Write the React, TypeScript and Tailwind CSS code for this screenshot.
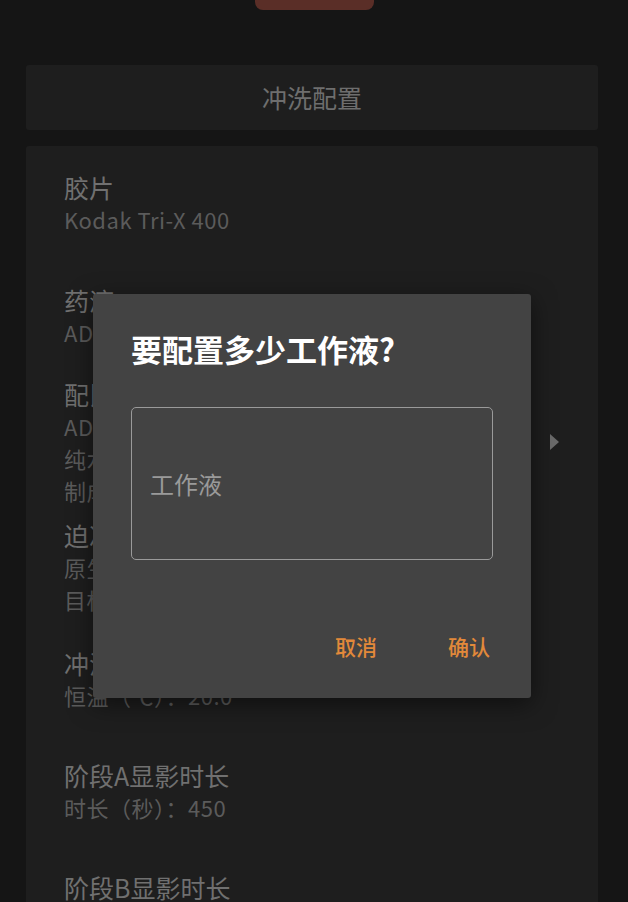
import React from 'react';

const font = { fontFamily: '"Noto Sans CJK SC", "Noto Sans", sans-serif' };

interface Item {
  title: string;
  lines: string[];
  gap: string;
  arrow?: boolean;
}

const items: Item[] = [
  { title: '胶片', lines: ['Kodak Tri-X 400'], gap: 'mb-[49px]' },
  { title: '药液', lines: ['ADOX ATOMAL 49'], gap: 'mb-[30px]' },
  {
    title: '配比',
    lines: ['ADOX ATOMAL 49：1', '纯水：0', '制成：1:0'],
    gap: 'mb-[13px]',
    arrow: true,
  },
  { title: '迫冲', lines: ['原生ISO：400', '目标ISO：400'], gap: 'mb-[32px]' },
  { title: '冲洗温度', lines: ['恒温（℃）：20.0'], gap: 'mb-[48px]' },
  { title: '阶段A显影时长', lines: ['时长（秒）：450'], gap: 'mb-[48px]' },
  { title: '阶段B显影时长', lines: ['时长（秒）：0'], gap: 'mb-[48px]' },
];

const Row = ({ item }: { item: Item }) => (
  <div className={`flex items-center ${item.gap}`}>
    <div className="flex-1 flex flex-col">
      <div className="text-[25px] leading-[32px] text-[#707070]">{item.title}</div>
      {item.lines.map((l) => (
        <div key={l} className="text-[22px] leading-[32px] tracking-[0.5px] text-[#5b5b5b] whitespace-nowrap">
          {l}
        </div>
      ))}
    </div>
    {item.arrow && (
      <svg width="9" height="16" viewBox="0 0 9 16" className="shrink-0">
        <path d="M0 0 L9 8 L0 16 Z" fill="#6a6a6a" />
      </svg>
    )}
  </div>
);

export default function App() {
  return (
    <div className="relative w-[628px] h-[902px] overflow-hidden bg-[#151515]" style={font}>
      {/* top button, scrolled mostly out of view */}
      <div className="flex justify-center">
        <div className="w-[119px] h-[10px] rounded-b-[8px] bg-[#5a2e27]" />
      </div>

      <div className="pl-[26px] pr-[30px] pt-[55px] flex flex-col gap-[16px]">
        <div className="h-[65px] rounded-[3px] bg-[#1e1e1e] flex items-center justify-center text-[25px] text-[#6e6e6e]">
          冲洗配置
        </div>
        <div className="rounded-[3px] bg-[#1e1e1e] pt-[25px] pl-[38px] pr-[39px] pb-[40px]">
          {items.map((it) => (
            <Row key={it.title} item={it} />
          ))}
        </div>
      </div>

      {/* dialog */}
      <div className="absolute left-[93px] top-[294px] w-[438px] h-[404px] bg-[#434343] rounded-[3px] shadow-[0_6px_24px_rgba(0,0,0,0.5)] flex flex-col">
        <div className="pl-[38px] pt-[35px] text-[31px] leading-[40px] font-bold text-white">
          要配置多少工作液?
        </div>
        <div className="mx-[38px] mt-[38px] h-[153px] rounded-[5px] border border-[#9a9a9a] flex items-center px-[18px]">
          <span className="text-[24px] text-[#9a9a9a]">工作液</span>
        </div>
        <div className="flex justify-end gap-[71px] pr-[41px] mt-[71px]">
          <span className="text-[21px] leading-[30px] font-medium text-[#e2893a]">取消</span>
          <span className="text-[21px] leading-[30px] font-medium text-[#e2893a]">确认</span>
        </div>
      </div>
    </div>
  );
}
